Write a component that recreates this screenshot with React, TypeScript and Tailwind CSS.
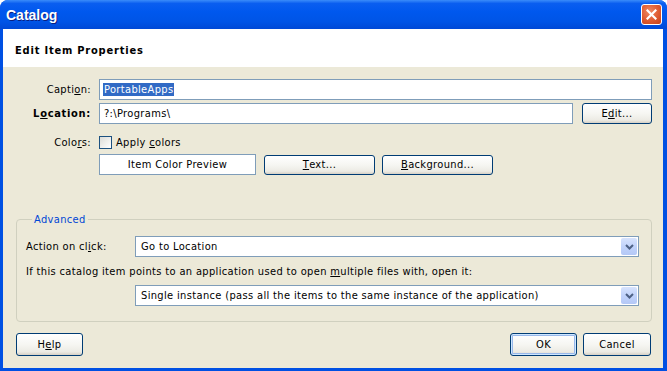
import React from "react";

const font = "font-['DejaVu_Sans_Condensed','DejaVu_Sans',sans-serif] text-[11px] leading-[13px] tracking-[0.35px]";

function XPButton({ children, className = "", def = false }: { children: React.ReactNode; className?: string; def?: boolean }) {
  return (
    <div
      className={
        "flex items-center justify-center border border-[#003C74] rounded-[3px] text-black bg-[linear-gradient(180deg,#FFFFFF_0%,#F6F6F2_50%,#ECEBE4_85%,#D6D0C5_100%)] " +
        (def ? "shadow-[inset_0_0_0_1px_#CEE7FF,inset_0_0_0_2px_#98B8EA] " : "") +
        className
      }
    >
      {children}
    </div>
  );
}

function Chevron() {
  return (
    <svg width="9" height="6" viewBox="0 0 9 6">
      <path d="M1 1 L4.5 4.5 L8 1" stroke="#4D6185" strokeWidth="2" fill="none" />
    </svg>
  );
}

function Select({ value }: { value: string }) {
  return (
    <div className="flex h-[21px] border border-[#7F9DB9] bg-white p-[1px]">
      <div className="flex-1 flex items-center pl-[4px] whitespace-nowrap">{value}</div>
      <div className="w-[16px] rounded-[2px] flex items-center justify-center bg-[linear-gradient(180deg,#D7E3FD_0%,#C1D3FB_50%,#B4C8F6_100%)]">
        <Chevron />
      </div>
    </div>
  );
}

export default function App() {
  return (
    <div className={"w-[667px] h-[371px] flex flex-col rounded-t-[8px] overflow-hidden bg-[#0050E3] " + font}>
      {/* title bar */}
      <div className="h-[29px] flex items-center justify-between pl-[6px] pr-[5px] bg-[linear-gradient(180deg,#3A8CFA_0%,#0A5EF0_12%,#0058EE_40%,#0054E6_75%,#0049D6_100%)]">
        <span className="font-['Liberation_Sans',sans-serif] font-bold text-[14px] tracking-normal text-white pt-[1px] [text-shadow:1px_1px_0_#0A1E80]">Catalog</span>
        <div className="w-[21px] h-[21px] rounded-[3px] border border-white flex items-center justify-center bg-[radial-gradient(circle_at_40%_35%,#F08A64_0%,#DE5A30_55%,#C5401A_100%)]">
          <svg width="11" height="11" viewBox="0 0 11 11">
            <path d="M1.5 1.5 L9.5 9.5 M9.5 1.5 L1.5 9.5" stroke="white" strokeWidth="2.2" strokeLinecap="square" />
          </svg>
        </div>
      </div>

      <div className="flex-1 flex flex-col ml-[3px] mr-[4px] mb-[3px]">
        {/* header */}
        <div className="h-[38px] bg-white flex items-center pl-[12px] pt-[4px] font-bold tracking-[0.8px] text-black">Edit Item Properties</div>

        {/* body */}
        <div className="flex-1 bg-[#ECE9D8] pl-[13px] pr-[11px] pt-[12px] flex flex-col text-black">
          <div className="flex items-center h-[21px]">
            <span className="w-[75px] mr-[8px] text-right">Capti<u>o</u>n:</span>
            <div className="flex-1 h-full border border-[#7F9DB9] bg-white flex items-center pl-[3px]">
              <span className="bg-[#316AC5] text-white px-[1px]">PortableApps</span>
            </div>
          </div>

          <div className="flex items-center h-[21px] mt-[3px]">
            <span className="w-[75px] mr-[8px] text-right font-bold tracking-[0.7px]">L<u>o</u>cation:</span>
            <div className="flex-1 h-full border border-[#7F9DB9] bg-white flex items-center pl-[4px]">?:\Programs\</div>
            <XPButton className="ml-[9px] w-[70px] h-full">
              E<u>d</u>it...
            </XPButton>
          </div>

          <div className="flex items-center h-[17px] mt-[10px]">
            <span className="w-[75px] mr-[8px] text-right">Colo<u>r</u>s:</span>
            <div className="w-[13px] h-[13px] border border-[#1C5180] bg-[linear-gradient(135deg,#DCDCD7_0%,#FFFFFF_100%)]" />
            <span className="ml-[4px]">
              Apply <u>c</u>olors
            </span>
          </div>

          <div className="flex items-center h-[21px] mt-[3px] pl-[83px]">
            <div className="w-[157px] h-full border border-[#7F9DB9] bg-white flex items-center justify-center">Item Color Preview</div>
            <XPButton className="ml-[8px] w-[111px] h-[20px]">
              <u>T</u>ext...
            </XPButton>
            <XPButton className="ml-[7px] w-[111px] h-[20px]">
              <u>B</u>ackground...
            </XPButton>
          </div>

          <fieldset className="mt-[38px] border border-[#D0D0BF] rounded-[4px] pl-[9px] pr-[12px] pb-[15px]">
            <legend className="ml-[6px] px-[2px] text-[#0046D5]">Advanced</legend>
            <div className="flex items-center mt-[10px]">
              <span className="w-[109px]">
                Action on cl<u>i</u>ck:
              </span>
              <div className="flex-1">
                <Select value="Go to Location" />
              </div>
            </div>
            <div className="mt-[8px] whitespace-nowrap">
              If this catalog item points to an application used to open <u>m</u>ultiple files with, open it:
            </div>
            <div className="mt-[7px] pl-[109px]">
              <Select value="Single instance (pass all the items to the same instance of the application)" />
            </div>
          </fieldset>

          <div className="flex mt-[11px] mr-[1px]">
            <XPButton className="w-[67px] h-[23px]">
              H<u>e</u>lp
            </XPButton>
            <XPButton def className="ml-auto w-[67px] h-[23px]">
              OK
            </XPButton>
            <XPButton className="ml-[6px] w-[68px] h-[23px]">Cancel</XPButton>
          </div>
        </div>
      </div>
    </div>
  );
}
